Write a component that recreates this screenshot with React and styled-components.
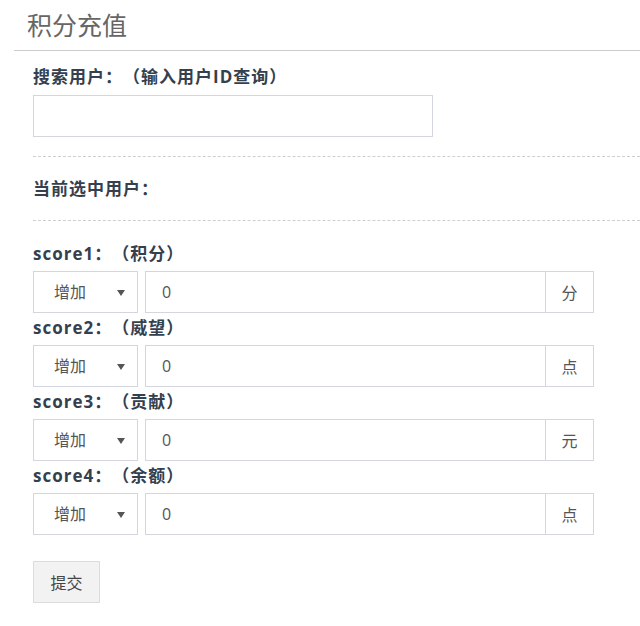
import React from 'react';
import styled, { createGlobalStyle } from 'styled-components';

const GlobalStyle = createGlobalStyle`
  body {
    margin: 0;
    background: #fff;
    font-family: "Open Sans", "Noto Sans CJK SC", sans-serif;
    text-spacing-trim: space-all;
  }
`;

const Page = styled.div`
  width: 640px;
  height: 626px;
  background: #fff;
  overflow: hidden;
`;

const Header = styled.div`
  height: 50px;
  margin-left: 14px;
  padding-left: 13px;
  border-bottom: 1px solid #cccccc;
  font-size: 25px;
  line-height: 50px;
  color: #666;
`;

const Body = styled.div`
  padding-left: 33px;
`;

const Label = styled.div`
  margin-top: ${p => p.$top}px;
  height: 20px;
  line-height: 20px;
  font-size: 17px;
  letter-spacing: 1px;
  font-weight: bold;
  color: #34404e;
  white-space: nowrap;
`;

const SearchInput = styled.input`
  display: block;
  box-sizing: border-box;
  margin-top: 8px;
  width: 400px;
  height: 42px;
  border: 1px solid #d3d6e0;
  outline: none;
`;

const Divider = styled.div`
  margin-top: ${p => p.$top}px;
  border-top: 1px dashed #cfcfcf;
`;

const Row = styled.div`
  display: flex;
  margin-top: 7px;
  height: 42px;
`;

const SelectBox = styled.div`
  position: relative;
  box-sizing: border-box;
  width: 105px;
  height: 42px;
  margin-right: 7px;
  border: 1px solid #d3d6e0;

  &::after {
    content: '';
    position: absolute;
    right: 12px;
    top: 18px;
    border-left: 4px solid transparent;
    border-right: 4px solid transparent;
    border-top: 6px solid #555;
  }
`;

const Select = styled.select`
  appearance: none;
  width: 100%;
  height: 100%;
  border: none;
  background: transparent;
  padding-left: 20px;
  font-family: inherit;
  font-size: 16px;
  color: #555;
  outline: none;
`;

const NumInput = styled.input`
  box-sizing: border-box;
  width: 400px;
  height: 42px;
  padding-left: 16px;
  border: 1px solid #d3d6e0;
  border-right: none;
  font-family: inherit;
  font-size: 16px;
  color: #555;
  outline: none;
`;

const Addon = styled.div`
  box-sizing: border-box;
  width: 49px;
  height: 42px;
  border: 1px solid #d3d6e0;
  display: flex;
  align-items: center;
  justify-content: center;
  font-size: 16px;
  color: #555;
`;

const SubmitButton = styled.button`
  margin-top: 26px;
  box-sizing: border-box;
  width: 67px;
  height: 42px;
  background: #f2f2f2;
  border: 1px solid #dcdcdc;
  font-family: inherit;
  font-size: 16px;
  color: #444;
  cursor: pointer;
`;

const scores = [
  { key: 'score1', name: '积分', unit: '分' },
  { key: 'score2', name: '威望', unit: '点' },
  { key: 'score3', name: '贡献', unit: '元' },
  { key: 'score4', name: '余额', unit: '点' },
];

export default function App() {
  return (
    <Page>
      <GlobalStyle />
      <Header>积分充值</Header>
      <Body>
        <Label $top={16}>搜索用户：（输入用户ID查询）</Label>
        <SearchInput />
        <Divider $top={19} />
        <Label $top={22}>当前选中用户：</Label>
        <Divider $top={21} />
        {scores.map((s, i) => (
          <div key={s.key}>
            <Label $top={i === 0 ? 23 : 5}>{s.key}：（{s.name}）</Label>
            <Row>
              <SelectBox>
                <Select defaultValue="add">
                  <option value="add">增加</option>
                  <option value="sub">减少</option>
                </Select>
              </SelectBox>
              <NumInput defaultValue="0" />
              <Addon>{s.unit}</Addon>
            </Row>
          </div>
        ))}
        <SubmitButton>提交</SubmitButton>
      </Body>
    </Page>
  );
}
